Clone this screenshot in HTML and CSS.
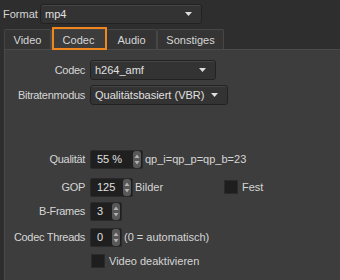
FILE: index.html
```html
<!DOCTYPE html>
<html lang="de">
<head>
    <meta charset="UTF-8">
    <title>Codec Einstellungen</title>
    <link rel="stylesheet" href="styles.css">
</head>
<body>
    <!-- Format selection on top -->
    <div class="format-row">
        <span class="format-label">Format</span>
        <div class="combo combo-format">
            <span>mp4</span>
            <svg class="combo-arrow" width="7" height="4" viewBox="0 0 7 4"><path d="M0 0h7L3.5 4z" fill="#dedede"/></svg>
        </div>
    </div>

    <!-- Tab bar -->
    <div class="tabs">
        <div class="tab tab-video">Video</div>
        <div class="tab tab-codec active">Codec</div>
        <div class="tab tab-audio">Audio</div>
        <div class="tab tab-misc">Sonstiges</div>
    </div>

    <!-- Codec page -->
    <div class="panel">
        <div class="form">
            <label class="lbl">Codec</label>
            <div class="field">
                <div class="combo combo-codec">
                    <span>h264_amf</span>
                    <svg class="combo-arrow" width="7" height="4" viewBox="0 0 7 4"><path d="M0 0h7L3.5 4z" fill="#dedede"/></svg>
                </div>
            </div>

            <label class="lbl">Bitratenmodus</label>
            <div class="field">
                <div class="combo combo-mode">
                    <span>Qualitätsbasiert (VBR)</span>
                    <svg class="combo-arrow" width="7" height="4" viewBox="0 0 7 4"><path d="M0 0h7L3.5 4z" fill="#dedede"/></svg>
                </div>
            </div>

            <label class="lbl">Qualität</label>
            <div class="field">
                <div class="spin spin-quality">
                    <span class="spin-value">55 %</span>
                    <svg class="spin-btn" width="8" height="17" viewBox="0 0 8 17"><rect x="0" y="0" width="8" height="17" rx="3" fill="#585858"/><path d="M1.5 7L4 3.5 6.5 7z M1.5 10L4 13.5 6.5 10z" fill="#b0b0b0"/></svg>
                </div>
                <span class="after">qp_i=qp_p=qp_b=23</span>
            </div>

            <label class="lbl">GOP</label>
            <div class="field">
                <div class="spin spin-gop">
                    <span class="spin-value">125</span>
                    <svg class="spin-btn" width="8" height="17" viewBox="0 0 8 17"><rect x="0" y="0" width="8" height="17" rx="3" fill="#585858"/><path d="M1.5 7L4 3.5 6.5 7z M1.5 10L4 13.5 6.5 10z" fill="#b0b0b0"/></svg>
                </div>
                <span class="after unit">Bilder</span>
                <span class="check"></span>
                <span class="check-text">Fest</span>
            </div>

            <label class="lbl">B-Frames</label>
            <div class="field">
                <div class="spin spin-small">
                    <span class="spin-value">3</span>
                    <svg class="spin-btn" width="8" height="17" viewBox="0 0 8 17"><rect x="0" y="0" width="8" height="17" rx="3" fill="#585858"/><path d="M1.5 7L4 3.5 6.5 7z M1.5 10L4 13.5 6.5 10z" fill="#b0b0b0"/></svg>
                </div>
            </div>

            <label class="lbl">Codec Threads</label>
            <div class="field">
                <div class="spin spin-small">
                    <span class="spin-value">0</span>
                    <svg class="spin-btn" width="8" height="17" viewBox="0 0 8 17"><rect x="0" y="0" width="8" height="17" rx="3" fill="#585858"/><path d="M1.5 7L4 3.5 6.5 7z M1.5 10L4 13.5 6.5 10z" fill="#b0b0b0"/></svg>
                </div>
                <span class="after">(0 = automatisch)</span>
            </div>

            <span></span>
            <div class="field">
                <span class="check check-video"></span>
                <span class="check-text">Video deaktivieren</span>
            </div>
        </div>
    </div>
</body>
</html>
```

FILE: styles.css
```css
/* Global */
body {
    margin: 0;
    width: 340px;
    height: 280px;
    overflow: hidden;
    background: #2e2e2e;
    color: #d6d6d6;
    font-family: 'Liberation Sans', Arial, sans-serif;
    font-size: 11px;
}

/* Format row */
.format-row {
    display: flex;
    align-items: center;
    padding: 3px 0 0 3px;
    height: 21px;
}

.format-label {
    width: 37px;
}

/* Combo boxes */
.combo {
    display: flex;
    align-items: center;
    justify-content: space-between;
    box-sizing: border-box;
    height: 20px;
    padding: 0 9px 0 4px;
    background: #333333;
    border: 1px solid #222222;
    border-radius: 3px;
    box-shadow: inset 0 1px 0 #454545;
    color: #e0e0e0;
}

.combo-format {
    width: 162px;
}

.combo-codec {
    width: 126px;
}

.combo-mode {
    width: 138px;
}

/* Tabs */
.tabs {
    display: flex;
    margin-top: 5px;
    padding-left: 4px;
    height: 20px;
}

.tab {
    box-sizing: border-box;
    height: 20px;
    padding-top: 4px;
    text-align: center;
    background: #343434;
    border: 1px solid #464646;
    border-bottom: none;
    border-radius: 2px 2px 0 0;
    color: #d6d6d6;
}

.tab-video { width: 47px; }
.tab-codec { width: 55px; }
.tab-audio { width: 51px; }
.tab-misc { width: 67px; }

.tab.active {
    position: relative;
    background: #3c3c3c;
}

/* orange marker around the active tab */
.tab.active::after {
    content: "";
    position: absolute;
    left: 0;
    top: -3px;
    width: 51px;
    height: 19px;
    border: 2px solid #f0861c;
}

/* Page */
.panel {
    height: 230px;
    margin-left: 4px;
    background: #3d3d3d;
    border-top: 1px solid #4a4a4a;
    border-left: 1px solid #4a4a4a;
}

.form {
    display: grid;
    grid-template-columns: 80px auto;
    grid-template-rows: 25px 64px 28px 24px 26px 24px 20px;
    column-gap: 5px;
    padding-top: 10px;
}

.lbl {
    height: 20px;
    line-height: 20px;
    text-align: right;
    letter-spacing: -0.3px;
}

.field {
    display: flex;
    align-items: center;
    height: 20px;
}

/* Spin boxes */
.spin {
    display: flex;
    align-items: center;
    justify-content: space-between;
    box-sizing: border-box;
    height: 19px;
    padding: 0 1px 0 6px;
    background: #1f1f1f;
    border: 1px solid #2a2a2a;
    border-radius: 2px;
    color: #e0e0e0;
}

.spin-quality { width: 53px; }
.spin-gop { width: 43px; }
.spin-small { width: 32px; }

.after {
    margin-left: 2px;
}

.unit {
    width: 89px;
}

/* Check boxes */
.check {
    box-sizing: border-box;
    width: 14px;
    height: 14px;
    background: #1e1e1e;
    border: 1px solid #2a2a2a;
}

.check-video {
    margin-left: 1px;
}

.check-text {
    margin-left: 4px;
}
```
